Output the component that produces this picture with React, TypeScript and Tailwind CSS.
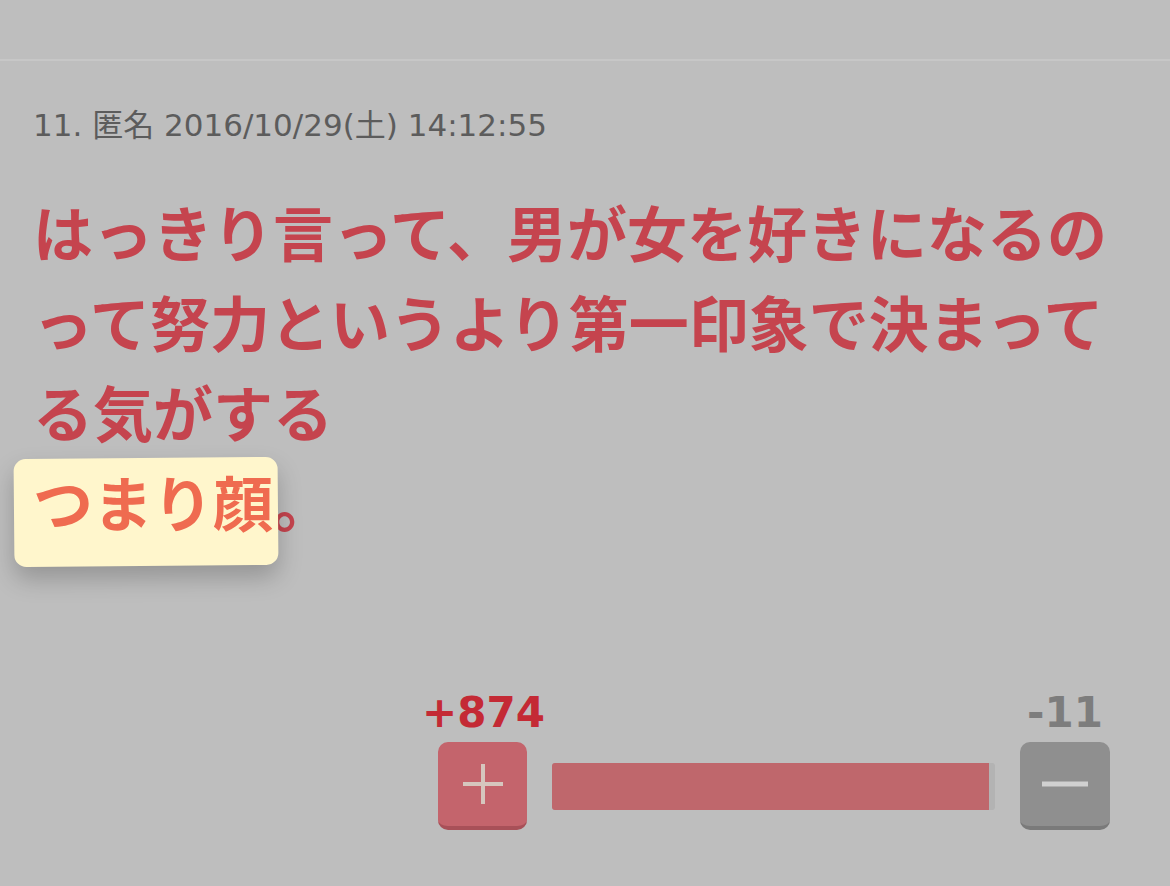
import React from "react";

const plus = 874;
const minus = 11;

function PlusIcon() {
  return (
    <svg width="44" height="44" viewBox="0 0 44 44" fill="none">
      <path d="M22 2v40M2 22h40" stroke="#d6c6be" strokeWidth="4" />
    </svg>
  );
}

function MinusIcon() {
  return (
    <svg width="46" height="6" viewBox="0 0 46 6" fill="none">
      <path d="M0 3h46" stroke="#d0d0d0" strokeWidth="5" />
    </svg>
  );
}

function VoteBar() {
  const ratio = (plus / (plus + minus)) * 100;
  return (
    <div className="flex justify-end pr-[60px]">
      <div className="grid w-[672px] grid-cols-[89px_1fr_90px] gap-x-[25px] font-['DejaVu_Sans',sans-serif] font-bold">
        <div className="-mx-4 text-center text-[42px] leading-[48px] text-[#c42a35]">
          +{plus}
        </div>
        <div />
        <div className="-mx-4 text-center text-[42px] leading-[48px] text-[#7d7d7d]">
          -{minus}
        </div>

        <button className="mt-[5px] flex h-[88px] items-center justify-center rounded-[10px] border-b-[4px] border-[#a85058] bg-[#c4646c]">
          <PlusIcon />
        </button>
        <div className="mt-[26px] flex h-[47px] overflow-hidden rounded-[3px] bg-[#b3b3b3]">
          <div className="h-full bg-[#bf676c]" style={{ width: `${ratio}%` }} />
        </div>
        <button className="mt-[5px] flex h-[88px] items-center justify-center rounded-[10px] border-b-[4px] border-[#7a7a7a] bg-[#8f8f8f]">
          <MinusIcon />
        </button>
      </div>
    </div>
  );
}

export default function App() {
  return (
    <div className="h-[886px] w-full overflow-hidden bg-[#bebebe]">
      <div className="h-[61px] border-b-2 border-[#c7c7c7]" />

      <div className="pl-[33px] pt-[46px] font-['DejaVu_Sans','Noto_Sans_CJK_JP',sans-serif] text-[31px] leading-[36px] text-[#5c5c5c]">
        11. 匿名 2016/10/29(土) 14:12:55
      </div>

      <div className="mt-[43px] pl-[33px] font-['Noto_Sans_CJK_JP',sans-serif] text-[60px] font-bold leading-[90px] text-[#c5444e]">
        はっきり言って、男が女を好きになるの
        <br />
        って努力というより第一印象で決まって
        <br />
        る気がする
        <br />
        <span className="relative inline-block">
          <span className="absolute -bottom-[20px] -left-[19px] -right-[5px] top-[2px] rotate-[-0.5deg] rounded-[12px] bg-[#fff6cc] shadow-[0_12px_24px_rgba(0,0,0,0.22)]" />
          <span className="relative text-[#ef6b50]">つまり顔</span>
        </span>
        。
      </div>

      <div className="mt-[143px]">
        <VoteBar />
      </div>
    </div>
  );
}
